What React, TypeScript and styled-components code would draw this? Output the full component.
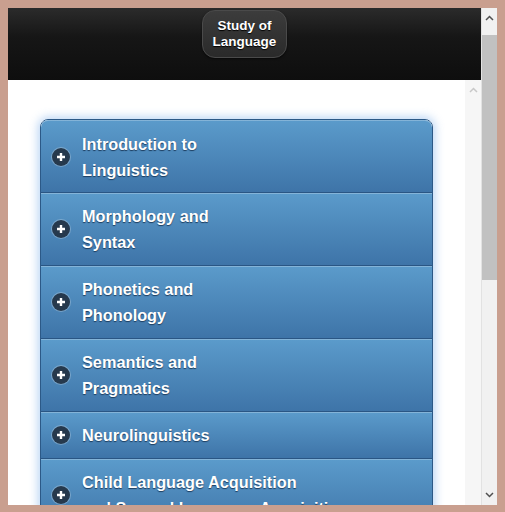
import styled, { createGlobalStyle } from "styled-components";

const GlobalStyle = createGlobalStyle`
  html, body {
    margin: 0;
    padding: 0;
    background: #c99f8f;
  }
  * {
    box-sizing: border-box;
  }
`;

const Frame = styled.div`
  width: 505px;
  height: 512px;
  border: 8px solid #c99f8f;
  border-bottom-width: 7px;
  display: flex;
  overflow: hidden;
  font-family: "Liberation Sans", Arial, sans-serif;
`;

const Main = styled.div`
  width: 473px;
  display: flex;
  flex-direction: column;
  height: 100%;
`;

const Header = styled.header`
  height: 72px;
  flex: none;
  display: flex;
  justify-content: center;
  align-items: flex-start;
  padding-top: 2px;
  background: linear-gradient(#2b2b2b, #161616 40%, #0e0e0e);
`;

const TitleButton = styled.div`
  width: 85px;
  height: 48px;
  border-radius: 13px;
  border: 1px solid #4a4a4a;
  background: linear-gradient(#3c3c3c, #2a2a2a);
  box-shadow: 0 1px 2px rgba(0, 0, 0, 0.6);
  color: #fff;
  font-weight: bold;
  font-size: 13.5px;
  line-height: 16px;
  text-align: center;
  display: flex;
  align-items: center;
  justify-content: center;
  text-shadow: 0 1px 1px #000;
`;

const Body = styled.div`
  flex: 1;
  display: flex;
  min-height: 0;
`;

const Page = styled.div`
  flex: 1;
  background: #fff;
  padding: 39px 32px 0;
  overflow: hidden;
`;

const Accordion = styled.div`
  border: 1px solid #2c5987;
  border-radius: 8px 8px 0 0;
  box-shadow: 0 0 10px 2px rgba(100, 160, 230, 0.45);
`;

const Row = styled.div<{ $first?: boolean; $lines: number }>`
  display: flex;
  align-items: center;
  gap: 12px;
  padding: ${(p) => (p.$first ? "11px 11px 9px" : "10px 11px")};
  min-height: ${(p) => (p.$lines > 1 ? 73 : 46) - (p.$first ? 1 : 0)}px;
  background: linear-gradient(#5b9bcb, #3e74a8);
  border-top: ${(p) => (p.$first ? "none" : "1px solid #2a5684")};
  box-shadow: inset 0 1px 0 rgba(255, 255, 255, 0.25);
  border-radius: ${(p) => (p.$first ? "7px 7px 0 0" : "0")};
  color: #fff;
  font-weight: bold;
  font-size: 16.3px;
  line-height: 26px;
  text-shadow: 0 1px 1px #1c3c5e;
`;

const PlusIcon = styled.span`
  flex: none;
  width: 18px;
  height: 18px;
  border-radius: 50%;
  background: #26394d;
  box-shadow: 0 0 0 1px rgba(255, 255, 255, 0.25);
  display: flex;
  align-items: center;
  justify-content: center;
`;

const Label = styled.span`
  white-space: nowrap;
`;

const Scrollbar = styled.div<{ $tone: "outer" | "inner" }>`
  width: 16px;
  flex: none;
  height: 100%;
  display: flex;
  flex-direction: column;
  align-items: center;
  background: ${(p) => (p.$tone === "outer" ? "#f1f1f1" : "#f6f6f6")};
  border-left: ${(p) => (p.$tone === "outer" ? "1px solid #e2e2e2" : "none")};
`;

const Arrow = styled.div<{ $light?: boolean }>`
  height: 20px;
  width: 100%;
  flex: none;
  display: flex;
  align-items: center;
  justify-content: center;
  color: ${(p) => (p.$light ? "#c8c8c8" : "#505050")};
`;

const Thumb = styled.div`
  width: 15px;
  height: 245px;
  margin-top: 7px;
  background: #c1c1c1;
`;

const Spacer = styled.div`
  flex: 1;
`;

function Chevron({ up }: { up?: boolean }) {
  return (
    <svg width="9" height="6" viewBox="0 0 9 6">
      <path
        d={up ? "M1 5 L4.5 1.5 L8 5" : "M1 1 L4.5 4.5 L8 1"}
        fill="none"
        stroke="currentColor"
        strokeWidth="1.5"
      />
    </svg>
  );
}

const sections = [
  ["Introduction to", "Linguistics"],
  ["Morphology and", "Syntax"],
  ["Phonetics and", "Phonology"],
  ["Semantics and", "Pragmatics"],
  ["Neurolinguistics"],
  ["Child Language Acquisition", "and Second Language Acquisition"],
];

export default function App() {
  return (
    <>
      <GlobalStyle />
      <Frame>
        <Main>
          <Header>
            <TitleButton>
              Study of
              <br />
              Language
            </TitleButton>
          </Header>
          <Body>
            <Page>
              <Accordion>
                {sections.map((lines, i) => (
                  <Row key={i} $first={i === 0} $lines={lines.length}>
                    <PlusIcon>
                      <svg width="10" height="10" viewBox="0 0 10 10">
                        <path d="M5 1 V9 M1 5 H9" stroke="#fff" strokeWidth="2.4" />
                      </svg>
                    </PlusIcon>
                    <Label>
                      {lines.map((l, j) => (
                        <span key={j}>
                          {j > 0 && <br />}
                          {l}
                        </span>
                      ))}
                    </Label>
                  </Row>
                ))}
              </Accordion>
            </Page>
            <Scrollbar $tone="inner">
              <Arrow $light>
                <Chevron up />
              </Arrow>
            </Scrollbar>
          </Body>
        </Main>
        <Scrollbar $tone="outer">
          <Arrow>
            <Chevron up />
          </Arrow>
          <Thumb />
          <Spacer />
          <Arrow>
            <Chevron />
          </Arrow>
        </Scrollbar>
      </Frame>
    </>
  );
}
